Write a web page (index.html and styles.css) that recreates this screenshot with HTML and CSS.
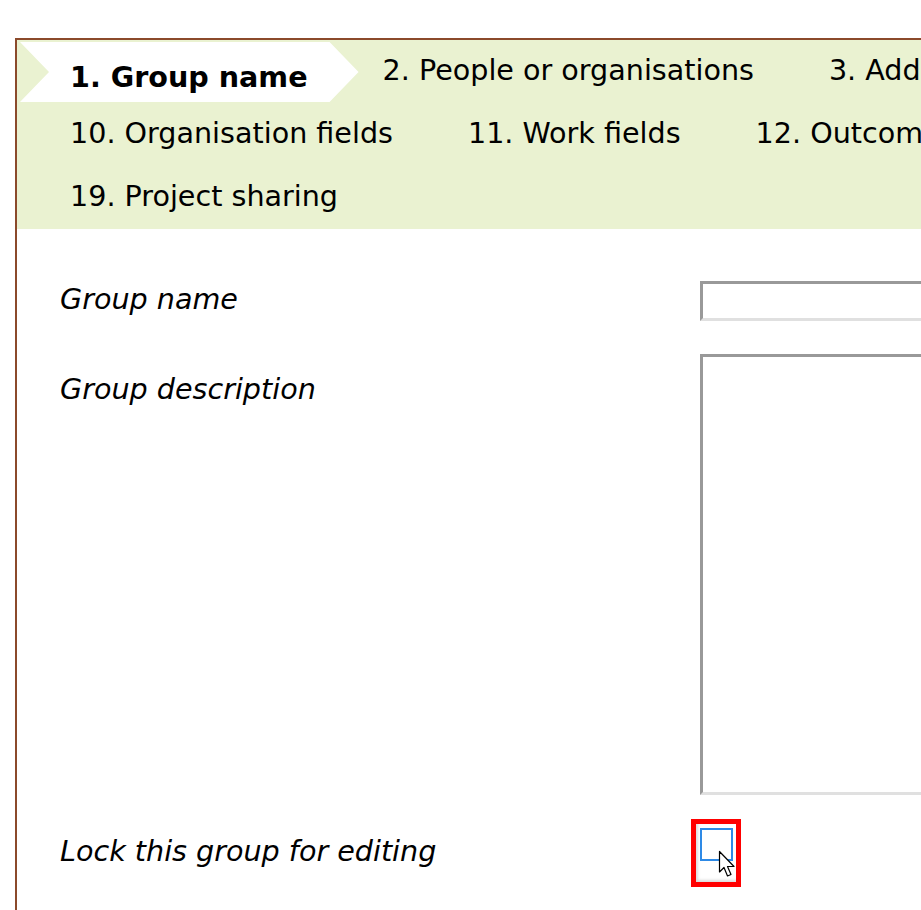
FILE: index.html
```html
<!DOCTYPE html>
<html>
<head>
<meta charset="utf-8">
<link rel="stylesheet" href="styles.css">
</head>
<body>
<div class="panel">
  <div class="steps">
    <ul class="steps-row">
      <li class="step active">1. Group name</li>
      <li class="step">2. People or organisations</li>
      <li class="step">3. Additional fields</li>
    </ul>
    <ul class="steps-row">
      <li class="step">10. Organisation fields</li>
      <li class="step">11. Work fields</li>
      <li class="step">12. Outcomes</li>
    </ul>
    <ul class="steps-row">
      <li class="step">19. Project sharing</li>
    </ul>
  </div>
  <div class="form">
    <div class="row">
      <label class="label">Group name</label>
      <input class="field" type="text">
    </div>
    <div class="row">
      <label class="label label-top">Group description</label>
      <textarea class="field area"></textarea>
    </div>
    <div class="row check-row">
      <label class="label">Lock this group for editing</label>
      <span class="highlight">
        <span class="checkbox"></span>
        <svg class="cursor" width="20" height="30" viewBox="0 0 20 30">
          <path d="M1.5 1.5 L1.5 22 L6 17.5 L9.5 26 L13 24.5 L9.5 16.5 L16 16.5 Z" fill="#fff" stroke="#000" stroke-width="1.2" stroke-linejoin="round"/>
        </svg>
      </span>
    </div>
  </div>
</div>
</body>
</html>
```
FILE: styles.css
```css
html, body {
  overflow: hidden;
}
body {
  margin: 0;
  padding: 38px 0 0 15px;
  background: #fff;
  font-family: "DejaVu Sans", Verdana, sans-serif;
  color: #000;
}
.panel {
  width: 1400px;
  height: 900px;
  border-top: 2px solid #8b4a2b;
  border-left: 2px solid #8b4a2b;
}
.steps {
  background: #eaf2d1;
  padding: 2px 0 1px 3px;
}
.steps-row {
  list-style: none;
  margin: 0 0 3px 0;
  padding: 0;
  display: flex;
  flex-wrap: nowrap;
}
.steps-row:last-child {
  margin-bottom: 0;
}
.step {
  box-sizing: border-box;
  height: 60px;
  line-height: 56px;
  padding: 0 51px 4px 50px;
  margin-right: -26px;
  font-size: 28.6px;
  white-space: nowrap;
}
.active {
  font-weight: bold;
  line-height: 50px;
  padding: 10px 51px 0 50px;
  background: #fff;
  clip-path: polygon(0 0, calc(100% - 29px) 0, 100% 50%, calc(100% - 29px) 100%, 0 100%, 29px 50%);
}
.form {
  padding: 52px 0 0 43px;
}
.row {
  display: flex;
  align-items: flex-start;
}
.label {
  width: 640px;
  font-style: italic;
  font-size: 28.6px;
  line-height: 34px;
  padding-top: 1px;
}
.label-top {
  padding-top: 18px;
}
.field {
  box-sizing: border-box;
  width: 400px;
  height: 40px;
  border: 3px solid;
  border-color: #999 #e0e0e0 #e0e0e0 #999;
  margin: 0 0 33px 0;
  padding: 0;
  background: #fff;
}
.area {
  height: 441px;
  resize: none;
  margin-bottom: 24px;
}
.check-row {
  align-items: center;
}
.check-row .label {
  padding: 0 0 5px 0;
}
.highlight {
  position: relative;
  box-sizing: border-box;
  width: 50px;
  height: 68px;
  border: 5px solid #f00;
  margin-left: -9px;
  padding: 4px 0 0 4px;
  box-shadow: inset 2px -2px 3px rgba(0,0,0,0.15);
}
.checkbox {
  display: block;
  box-sizing: border-box;
  width: 33px;
  height: 33px;
  border: 2px solid #2e8ae6;
  background: #fff;
}
.cursor {
  position: absolute;
  left: 22px;
  top: 26px;
}
```
